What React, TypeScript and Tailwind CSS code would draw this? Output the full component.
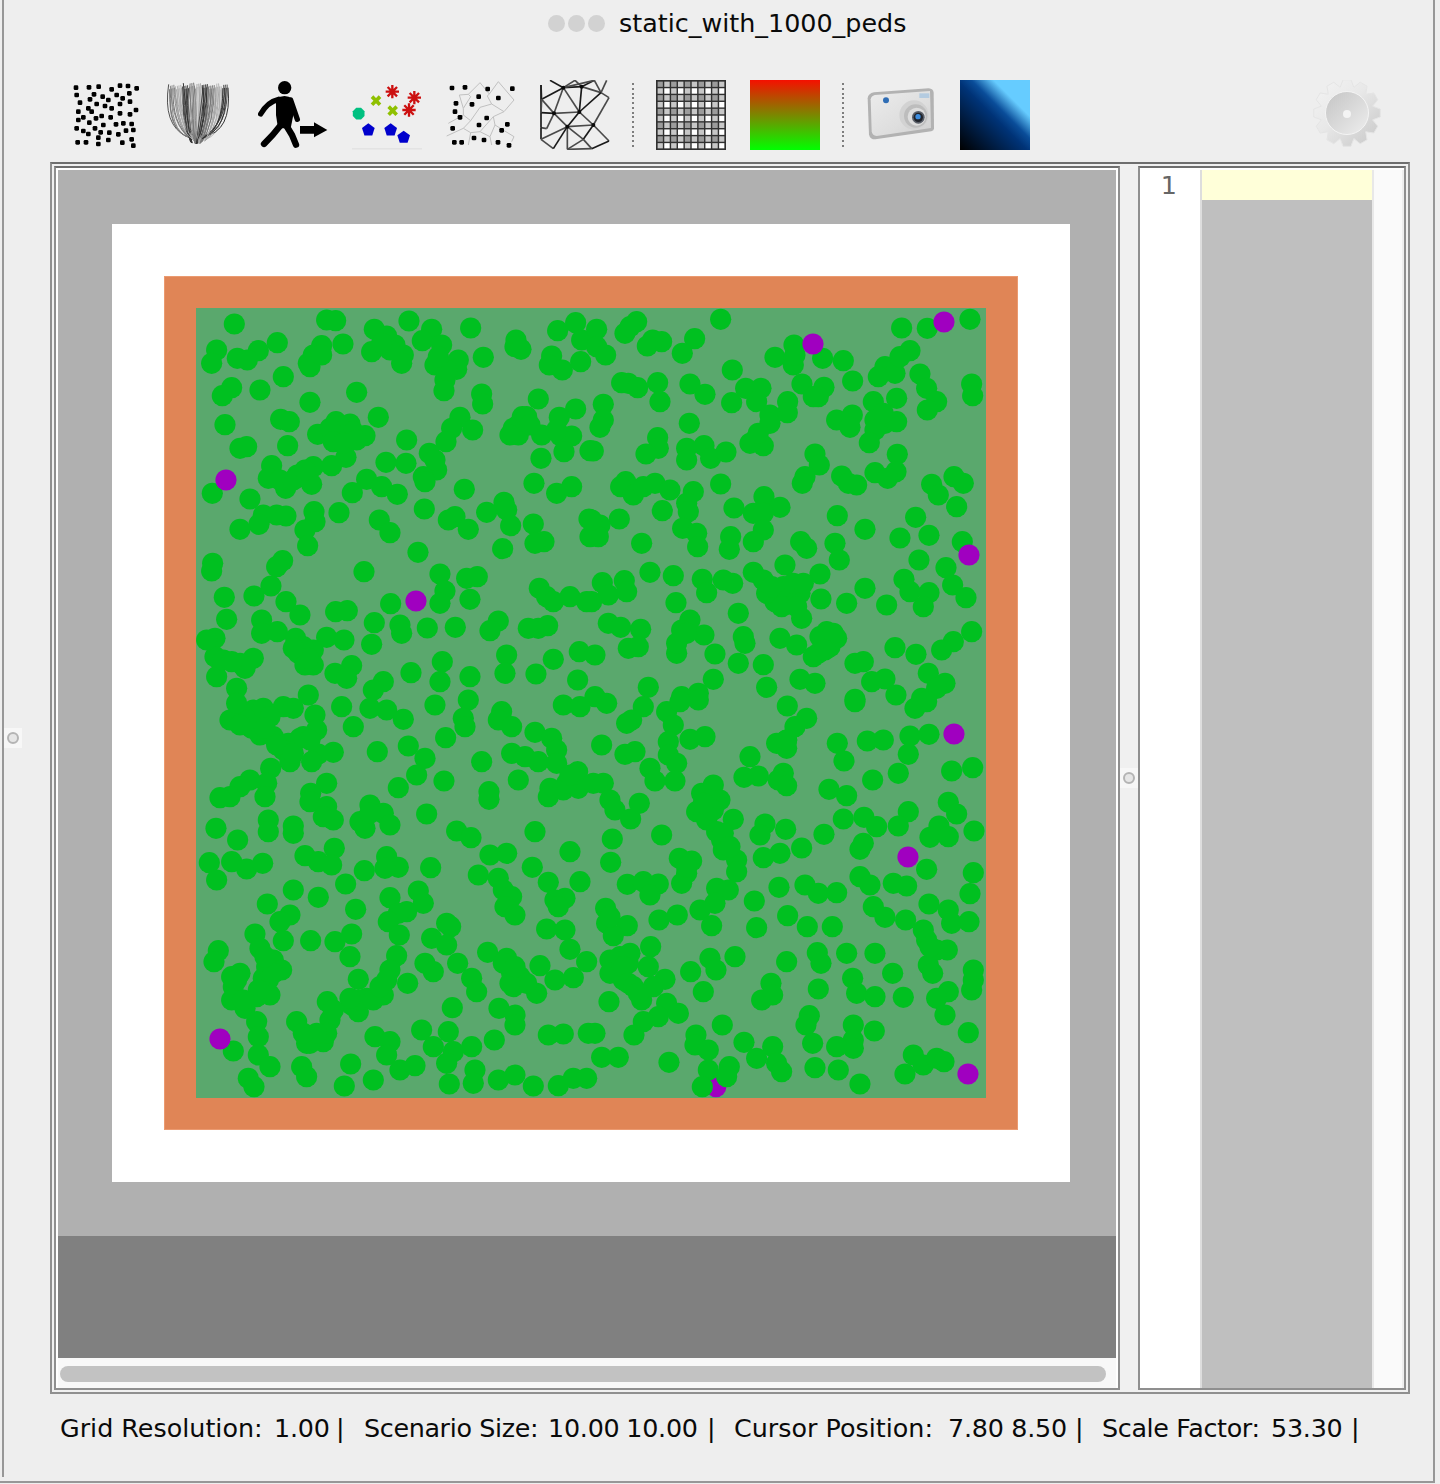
import React from "react";

const parse = (s: string, ox: number, oy: number) =>
  s.trim().split(/\s*;\s*/).filter(Boolean).map((p) => {
    const [x, y] = p.split(",").map(Number);
    return [ox + x / 3 - 196, oy + y / 3 - 308] as [number, number];
  });

const Q1 = `133,72;410,60;437,62;657,63;842,84;553,88;725,88;1103,92;1157,68;262,128;459,132;590,108;697,122;755,135;80,150;205,152;395,137;370,165;545,155;615,135;640,165;635,190;880,172;978,120;975,140;993,148;142,175;172,180;65,190;355,190;360,200;735,195;805,180;800,208;1085,168;1078,195;1117,210;1172,185;1175,120;280,230;765,240;762,272;125,263;97,287;210,270;500,277;875,282;878,312;360,307;1045,297;1157,327;1108,352;105,374;272,358;298,365;438,365;480,372;565,352;810,352;785,385;848,390;997,350;970,385;985,405;1055,405;1112,408;1145,408;383,403;440,405;470,405;525,407;650,420;768,425;150,445;170,440;293,437;1122,455;1200,452;718,460;468,472;1053,475;245,497;370,500;425,497;588,487;648,490;322,525;235,535;345,530;365,553;287,565;530,538;740,510;700,530;705,545;575,560;622,583;487,578;67,580;180,597;823,568;1032,550;1100,580;1145,560;942,607;890,637;950,630;962,677;703,627;447,638;372,635;375,665;345,690;353,737;220,645;260,645;288,648;207,673;150,688;568,660;600,698;775,660;795,650;835,688;1030,672;1062,725;1035,730;938,746;1197,657;1200,710;684,757;278,782;260,800;68,790;65,813;522,815;750,822;243,858;830,835;862,830;1048,865;1070,890;1090,905;1140,890;1190,905;765,873;750,910;840,898;602,911;103,892;192,888;288,905;330,945;437,935;472,932;110,958;553,968;215,960;925,963;900,992;630,975;635,1000;712,984;796,982;1015,985;1045,985;1073,977;75,1015;215,1000;262,995;317,1015;410,1012;462,1020;545,1033;75,1070;190,1075;325,1060;370,1050;150,1090;165,1105;370,1095;345,1095;950,1065;945,1120;1090,1078;1168,1055;757,1085;485,1097;435,1120;470,1135;80,1130;663,1118;750,1145;840,1130;1038,1122;1163,1140;140,1165;580,1145;550,1170;355,1185;50,1020;100,1080;125,1085;340,1040;355,1075;310,1045;450,380;490,395;420,385;430,425;460,430;500,420;985,375;1010,350;1020,375;960,405;600,150;575,130;770,210;745,170;395,165;1100,390;735,480;270,540;310,540;345,510`;
const Q2 = `392,58;140,65;1140,58;20,88;105,100;935,84;1012,85;612,135;314,116;215,125;188,120;172,138;960,152;555,172;698,175;760,182;20,140;47,165;610,195;277,160;885,200;915,220;930,170;865,230;427,210;95,248;115,250;143,263;203,248;990,222;788,243;300,252;345,283;636,252;702,262;685,290;670,290;467,265;513,265;1145,252;1148,287;1010,265;1040,305;210,305;425,308;500,305;593,305;592,338;850,305;920,295;40,313;1012,330;540,345;540,370;740,360;787,345;780,382;855,360;885,370;920,365;855,390;40,360;30,382;298,370;203,413;205,445;168,462;838,428;495,420;520,437;480,430;290,445;290,480;342,437;362,475;408,456;10,453;675,462;688,495;922,463;918,515;855,518;893,535;755,528;775,550;800,555;645,530;637,550;1092,530;1120,550;1025,553;1045,585;1100,620;107,545;92,560;130,585;160,560;195,550;240,570;392,552;310,575;290,610;295,635;217,632;522,590;570,622;432,624;490,640;520,640;520,690;490,725;742,647;977,652;825,688;930,714;1017,706;88,657;30,675;25,710;5,660;278,685;320,700;323,740;422,710;418,748;155,730;632,725;650,745;735,730;748,780;585,795;690,822;1117,725;987,780;1068,803;1088,855;1128,893;180,817;250,827;37,848;103,842;55,885;110,875;337,838;350,878;400,840;428,850;490,817;520,840;555,880;600,880;630,880;555,905;600,910;635,955;693,897;770,910;825,865;942,838;960,875;1017,878;1000,920;890,915;5,905;258,908;445,940;300,960;275,990;55,970;92,982;152,988;342,1005;260,1060;260,1030;460,1010;465,1030;570,1015;620,1035;710,995;740,1015;700,1030;685,1060;115,1045;145,1040;15,1065;375,1062;1145,995;1090,1025;1055,1050;915,1043;978,1063;445,1090;520,1094;795,1090;820,1085;1015,1120;1065,1150;1040,1165;370,1138;630,1138;675,1150;845,1145;885,1137;175,1162;530,1162;918,1185;325,1180;275,1190;795,1198;995,1195;15,1190;530,880;580,860;610,850;575,920;640,850;620,920;720,1040;690,1010;670,1070;730,1000;705,1050;615,165;120,80;880,340;505,400;290,1000;545,860`;
const Q3 = `150,30;120,60;190,30;210,60;185,85;210,105;250,110;280,20;310,25;375,45;380,90;330,115;295,130;280,150;300,185;455,20;540,25;590,30;640,58;490,80;735,15;835,0;820,55;825,80;935,35;925,60;965,80;1120,15;1170,20;767,113;1035,97;1085,115;1100,150;1100,190;655,138;562,155;705,175;680,225;965,160;1005,170;1045,185;430,157;385,162;365,185;875,185;242,205;180,240;150,260;120,290;90,293;230,250;225,290;762,243;985,240;1163,215;1080,265;1075,290;1120,270;1165,265;625,263;410,250;362,280;360,305;410,320;400,350;430,360;897,275;897,298;540,315;580,340;510,365;525,385;600,375;235,360;235,395;310,378;310,400;710,342;800,393;843,413;78,385;1035,395;143,420;433,445;345,467;385,485;425,495;1140,455;590,470;625,502;585,505;950,460;900,465;58,488;125,485;170,507;218,490;722,503;1027,502;80,540;523,512;467,552;865,525;925,535;940,570;965,590;945,620;975,645;1075,547;1170,545;310,570;385,592;232,612;600,593;685,573;700,610;650,635;625,640;1125,595;1095,600;1105,620;497,628;300,645;270,665;595,665;628,705;770,670;782,680;725,715;770,735;1070,687;1125,690;195,702;280,722;362,722;435,725;485,702;1140,748;85,752;210,745;480,770;620,767;893,757;72,785;250,780;275,810;950,775;705,790;730,815;803,790;1050,797;1190,785;150,820;220,835;505,838;600,810;845,835;860,875;965,820;1095,840;1150,833;653,850;130,860;125,900;240,885;200,890;580,885;530,895;970,860;1040,880;412,905;485,915;505,935;787,923;927,925;165,925;975,945;200,965;320,965;420,960;975,975;695,990;775,995;555,1010;600,1025;1075,1005;1120,1002;1195,1000;913,1020;205,1010;400,1025;350,1030;360,1030;130,1053;730,1040;845,1040;790,1055;590,1065;770,1090;205,1065;335,1100;350,1130;482,1092;630,1110;675,1097;240,1100;855,1110;975,1125;175,1135;192,1160;550,1140;463,1158;778,1152;850,1150;925,1140;1030,1158;1105,1157;1150,1135;1190,1135;140,10;175,60;150,75;220,25;240,50;225,85;260,135;310,160;340,110;360,120;990,830;1010,850;960,850;940,790;975,800;230,800;235,840;250,820;205,870;225,770;125,830;140,840;160,900;510,900;480,895;550,900;570,860;590,840;430,930;410,1000;380,1000;340,1000;540,340;1130,250;1140,225`;
const Q4 = `50,10;160,20;125,60;110,70;230,35;250,75;325,0;270,5;592,18;795,5;650,55;615,80;590,120;560,130;590,145;975,25;1010,5;35,135;105,163;135,155;235,125;235,165;260,190;300,118;345,110;180,205;195,243;255,243;480,170;462,232;505,228;580,220;565,240;590,257;742,130;762,183;832,123;880,120;960,108;1017,103;955,163;925,220;848,240;1085,213;1148,203;717,268;770,287;10,250;40,250;60,300;75,330;122,357;148,310;370,255;335,280;390,300;320,335;350,360;380,395;430,358;400,450;440,480;440,515;955,335;925,378;760,357;822,352;860,380;820,430;810,448;1075,307;1100,342;1047,378;1020,412;1075,410;1152,393;702,403;525,372;510,405;587,388;635,444;570,460;520,473;215,405;67,417;62,487;268,475;305,483;290,520;275,550;112,553;160,545;205,552;180,585;1010,508;1150,518;1140,581;645,555;685,580;740,578;567,562;810,530;840,555;910,550;950,558;380,565;415,570;375,610;330,630;493,603;1017,612;1075,630;1085,670;1137,665;850,620;885,652;947,660;1000,690;1010,720;1040,750;1072,750;593,647;652,680;727,680;500,683;365,677;262,645;207,660;47,625;50,670;112,677;70,707;682,758;693,790;770,760;855,760;590,785;1015,795;1028,820;182,740;175,800;85,780;70,810;115,790;100,840;360,775;435,770;378,810;302,815;340,875;908,820;1150,840;788,835;800,880;855,890;940,892;685,867;543,850;515,900;548,885;1075,875;1040,895;1065,945;57,905;155,900;225,838;190,860;230,910;265,940;205,950;160,965;132,1005;15,1000;658,947;648,975;668,1030;790,975;790,1020;790,1045;740,1040;853,993;1135,998;318,1005;397,975;315,1035;355,1050;462,1027;548,1040;500,1075;560,1090;575,1115;35,1072;85,1072;237,1087;355,1110;337,1160;418,1100;410,1130;675,1103;745,1110;810,1152;970,1065;945,1122;1000,1095;1040,1075;1062,1085;60,780;90,770;120,760;60,820;90,820;100,800;115,850;130,860;145,880;360,300;370,330;340,310;395,420;590,120;400,400;420,440;60,650;290,500;1020,740;1150,810;1145,870`;

const GREEN = [...parse(Q1, 190, 300), ...parse(Q2, 590, 300), ...parse(Q3, 190, 700), ...parse(Q4, 590, 700)];
const PURPLE: [number, number][] = [
  [944, 322], [813, 344], [226, 480], [969, 555], [416, 601], [954, 734], [908, 857], [220, 1039], [968, 1074],
].map(([x, y]) => [x - 196, y - 308]);

function Pedestrians() {
  return (
    <svg viewBox="0 0 790 790" className="block h-[790px] w-[790px]">
      <circle cx={716 - 196} cy={1087 - 308} r={10.3} fill="#a000c0" />
      {GREEN.map(([x, y], i) => (
        <circle key={i} cx={x} cy={y} r={10.6} fill="#00c020" />
      ))}
      {PURPLE.map(([x, y], i) => (
        <circle key={i} cx={x} cy={y} r={10.6} fill="#a000c0" />
      ))}
    </svg>
  );
}

const DOTS1 = `78,263;117,262;146,260;185,268;210,257;234,258;260,265;80,285;132,283;238,280;158,290;200,285;218,295;120,298;175,300;90,308;140,312;240,305;210,312;165,318;115,325;258,330;85,335;185,325;125,335;210,340;240,343;155,348;138,355;100,352;182,352;85,360;118,368;160,375;198,373;220,370;245,372;80,385;135,385;100,393;250,390;228,392;115,402;152,397;178,398;205,403;145,413;245,418;175,420;83,427;108,427;145,432;217,428;250,437`;
const DOTS5 = `1206,264;1245,262;1313,267;1387,266;1286,290;1345,294;1218,310;1266,313;1215,335;1230,352;1310,354;1372,373;1287,375;1208,385;1355,391;1272,414;1302,420;1213,427;1235,427;1344,427;1377,436`;
const pts = (s: string) => s.split(";").map((p) => p.split(",").map(Number));

const Icon = ({ vb, children }: { vb: string; children: React.ReactNode }) => (
  <svg viewBox={vb} className="block h-[70px] w-[70px] shrink-0 blur-[0.4px]">
    {children}
  </svg>
);

function IconScatter() {
  return (
    <Icon vb="60 240 210 210">
      {pts(DOTS1).map(([x, y], i) => (
        <rect key={i} x={x - 7} y={y - 7} width={14} height={14} rx={4} fill="#000000" />
      ))}
    </Icon>
  );
}

function IconBush() {
  const lines = [];
  for (let i = 0; i < 70; i++) {
    const t = ((i * 31) % 70) / 69;
    const off = t - 0.5;
    const tx = 445 + off * 178;
    const ty = 248 + ((i * 37) % 19) + off * off * 20;
    const bx = 445 + off * 50 + ((i * 7) % 21) - 10;
    const by = 432 - off * off * 90;
    const cx = 445 + off * 185 + ((i * 13) % 31) - 15;
    const cy = 345 + off * off * 120 + ((i * 29) % 30);
    lines.push(
      <path
        key={i}
        d={`M${tx} ${ty}Q${cx} ${cy} ${bx} ${by}`}
        fill="none"
        stroke={i % 3 === 0 ? "#333333" : i % 3 === 1 ? "#777777" : "#aaaaaa"}
        strokeWidth={i % 2 ? 3 : 2.5}
      />
    );
  }
  return <Icon vb="342 240 210 210">{lines}</Icon>;
}

function IconWalker() {
  return (
    <Icon vb="624 240 210 210">
      <circle cx={704} cy={263} r={20} fill="#000000" />
      <path d="M678 296Q704 280 728 296L730 345L722 385L684 385L678 345Z" fill="#000000" />
      <path d="M686 298Q652 306 632 342" fill="none" stroke="#000000" strokeWidth={16} strokeLinecap="round" />
      <path d="M722 300L742 358" fill="none" stroke="#000000" strokeWidth={16} strokeLinecap="round" />
      <path d="M695 372L668 405L642 432" fill="none" stroke="#000000" strokeWidth={19} strokeLinecap="round" />
      <path d="M706 372L726 405L738 434" fill="none" stroke="#000000" strokeWidth={19} strokeLinecap="round" />
      <path d="M750 378H792V367L832 390L792 412V401H750Z" fill="#000000" />
    </Icon>
  );
}

const star = (cx: number, cy: number, r: number, n: number, rot = 0) =>
  Array.from({ length: n }, (_, i) => {
    const a = rot + (i * Math.PI) / n;
    return `M${cx - Math.cos(a) * r} ${cy - Math.sin(a) * r}L${cx + Math.cos(a) * r} ${cy + Math.sin(a) * r}`;
  }).join("");
const poly = (cx: number, cy: number, r: number, n: number, rot = -Math.PI / 2) =>
  Array.from({ length: n }, (_, i) => {
    const a = rot + (i * 2 * Math.PI) / n;
    return `${cx + Math.cos(a) * r},${cy + Math.sin(a) * r}`;
  }).join(" ");

function IconClasses() {
  return (
    <Icon vb="906 240 210 210">
      <polygon points={poly(926, 341, 19, 8, Math.PI / 8)} fill="#00c080" />
      <path d={star(978, 302, 17, 2, Math.PI / 4)} stroke="#8fc000" strokeWidth={11} fill="none" />
      <path d={star(1028, 332, 17, 2, Math.PI / 4)} stroke="#8fc000" strokeWidth={11} fill="none" />
      <path d={star(1027, 275, 20, 4)} stroke="#cc1010" strokeWidth={7} fill="none" />
      <path d={star(1093, 293, 20, 4)} stroke="#cc1010" strokeWidth={7} fill="none" />
      <path d={star(1077, 330, 20, 4)} stroke="#cc1010" strokeWidth={7} fill="none" />
      <polygon points={poly(955, 390, 20, 5)} fill="#0000cc" />
      <polygon points={poly(1022, 390, 20, 5)} fill="#0000cc" />
      <polygon points={poly(1061, 412, 20, 5)} fill="#0000cc" />
      <rect x={906} y={445} width={210} height={3} fill="#dddddd" />
    </Icon>
  );
}

function IconVoronoi() {
  const cells = [
    "M1228 285L1255 283L1290 248L1318 282L1345 245L1392 300L1362 335L1325 312L1312 288L1318 282",
    "M1255 283L1262 290L1240 325L1240 345L1262 362L1290 322L1325 312",
    "M1228 285L1240 325",
    "M1262 362L1240 385L1262 398L1290 395L1330 350L1362 335",
    "M1330 350L1335 375L1392 410L1385 425",
    "M1335 375L1320 410L1325 435",
    "M1290 395L1320 410",
    "M1240 385L1190 408",
    "M1262 398L1255 435",
    "M1240 345L1195 370",
  ];
  return (
    <Icon vb="1188 240 210 210">
      {cells.map((d, i) => (
        <path key={i} d={d} fill="none" stroke="#c0c0c0" strokeWidth={3} />
      ))}
      {pts(DOTS5).map(([x, y], i) => (
        <rect key={i} x={x - 7} y={y - 7} width={14} height={14} rx={4} fill="#000000" />
      ))}
    </Icon>
  );
}

function IconDelaunay() {
  const N: Record<string, number[]> = {
    A: [85, 35], B: [140, 32], C: [198, 50], D: [20, 70], E: [57, 112], F: [133, 108], G: [175, 147], H: [97, 152],
    I: [18, 110], J: [18, 190], K: [55, 218], L: [97, 220], M: [145, 190], N: [170, 218], O: [222, 195], P: [222, 65],
    Q: [45, 13], R: [120, 13], S: [178, 13], T: [215, 13], U: [18, 27], V: [35, 158], W: [18, 155],
  };
  const E = "QA RA RB SB SC TC AB BC CP AD DE UD UI AE AF BF EF FG CF PG EH FH HG EV IE ID VW WJ JH JK KH LH HM MG GO MN NO LM LN IW SA".split(" ");
  return (
    <Icon vb="15 12 210 210">
      {E.map((e, i) => {
        const a = N[e[0]], b = N[e[1]];
        return <line key={i} x1={a[0]} y1={a[1]} x2={b[0]} y2={b[1]} stroke={i % 3 === 0 ? "#1a1a1a" : "#4a4a4a"} strokeWidth={5} />;
      })}
      {["A", "B", "E", "F", "H", "G"].map((k) => (
        <circle key={k} cx={N[k][0]} cy={N[k][1]} r={6} fill="#0a0a0a" />
      ))}
    </Icon>
  );
}

function IconGrid() {
  const p = Array.from({ length: 11 }, (_, i) => i * 6.86 + 0.7);
  return (
    <svg viewBox="0 0 70 70" className="block h-[70px] w-[70px] shrink-0">
      <rect width={70} height={70} fill="#ffffff" />
      {p.slice(0, 10).map((v, i) =>
        i % 2 === 0 ? (
          <g key={i}>
            <rect x={v} y={0} width={6.86} height={70} fill="#000000" fillOpacity={0.22} />
            <rect x={0} y={v} width={70} height={6.86} fill="#000000" fillOpacity={0.22} />
          </g>
        ) : null
      )}
      {p.map((v, i) => (
        <g key={i}>
          <rect x={v - 0.7} y={0} width={1.4} height={70} fill="#303030" />
          <rect x={0} y={v - 0.7} width={70} height={1.4} fill="#303030" />
        </g>
      ))}
      <rect x={0.7} y={0.7} width={68.6} height={68.6} fill="none" stroke="#303030" strokeWidth={1.4} />
    </svg>
  );
}

function IconCamera() {
  return (
    <Icon vb="1008 240 210 210">
      <defs>
        <linearGradient id="camBody" x1="0" y1="0" x2="1" y2="1">
          <stop offset="0" stopColor="#ececec" />
          <stop offset="0.6" stopColor="#dedede" />
          <stop offset="1" stopColor="#cfcfcf" />
        </linearGradient>
      </defs>
      <path d="M1032 277L1196 265Q1210 266 1211 278L1212 385Q1212 392 1204 394L1036 418Q1020 418 1017 404L1013 295Q1014 281 1032 277Z" fill="#b2b2b2" />
      <path d="M1034 285L1200 273L1203 384L1040 408Q1026 406 1025 394L1022 298Q1024 288 1034 285Z" fill="url(#camBody)" />
      <circle cx={1068} cy={301} r={9} fill="#2f6db5" />
      <rect x={1168} y={280} width={30} height={14} fill="#b4cbe0" />
      <circle cx={1152} cy={345} r={44} fill="#d2d2d2" />
      <circle cx={1157} cy={348} r={35} fill="#bdbdbd" />
      <circle cx={1160} cy={350} r={27} fill="#dddddd" />
      <circle cx={1165} cy={352} r={19} fill="#5a5f68" />
      <circle cx={1165} cy={352} r={14} fill="#20242c" />
      <circle cx={1164} cy={350} r={8} fill="#3e8ee0" />
    </Icon>
  );
}

function IconGear() {
  const n = 12;
  let d = "";
  for (let i = 0; i < n; i++) {
    const a = (i * 2 * Math.PI) / n;
    const w = Math.PI / n;
    const P = (r: number, t: number) => `${1347 + Math.cos(t) * r} ${113 + Math.sin(t) * r}`;
    d += `${i ? "L" : "M"}${P(26.5, a - w)}L${P(33.5, a - w * 0.45)}L${P(33.5, a + w * 0.45)}L${P(26.5, a + w)}`;
  }
  d += "Z";
  return (
    <svg viewBox="1312 80 70 70" className="block h-[70px] w-[70px] shrink-0 blur-[0.4px]">
      <defs>
        <linearGradient id="gearO" x1="0" y1="0" x2="1" y2="1">
          <stop offset="0" stopColor="#f4f4f4" />
          <stop offset="0.45" stopColor="#e8e8e8" />
          <stop offset="1" stopColor="#c6c6c6" />
        </linearGradient>
        <linearGradient id="gearI" x1="0" y1="0" x2="1" y2="1">
          <stop offset="0" stopColor="#c4c4c4" />
          <stop offset="1" stopColor="#eeeeee" />
        </linearGradient>
      </defs>
      <path d={d} fill="url(#gearO)" stroke="#e4e4e4" strokeWidth={1} />
      <circle cx={1347} cy={113} r={21.5} fill="url(#gearI)" stroke="#f4f4f4" strokeWidth={1} />
      <circle cx={1347} cy={114} r={4} fill="#f4f4f4" />
    </svg>
  );
}

const Separator = () => (
  <div className="-ml-[2px] -mr-[2px] flex h-[66px] w-[2px] shrink-0 flex-col justify-between self-center py-[1px]">
    {Array.from({ length: 14 }, (_, i) => (
      <div key={i} className="h-[2px] w-[2px] bg-[#7d7d7d]" />
    ))}
  </div>
);

const Grip = () => <div className="h-[12px] w-[12px] rounded-full border-2 border-[#b4b4b4] bg-[#e6e6e6]" />;

export default function App() {
  return (
    <div
      className="relative h-[1484px] w-[1440px] overflow-hidden bg-[#eeeeee] text-[25.4px] leading-[32px] text-[#0a0a0a]"
      style={{ fontFamily: '"DejaVu Sans", sans-serif' }}
    >
      <div className="relative flex h-[1483px] w-[1435px] flex-col border-b-2 border-r-2 border-[#979797]">
        <div className="absolute left-[2px] top-0 h-[1477px] w-[2px] bg-[#979797]" />
        <div className="absolute left-[4px] top-[728px] flex h-[20px] w-[18px] items-center justify-center bg-[#f7f7f7]">
          <Grip />
        </div>

        <div className="flex h-[46px] items-center pl-[548px]">
          <div className="flex gap-[3px]">
            <div className="h-[17px] w-[17px] rounded-full bg-[#d2d2d2]" />
            <div className="h-[17px] w-[17px] rounded-full bg-[#d2d2d2]" />
            <div className="h-[17px] w-[17px] rounded-full bg-[#d2d2d2]" />
          </div>
          <span className="ml-[14px] whitespace-nowrap">static_with_1000_peds</span>
        </div>

        <div className="mt-[34px] flex h-[70px] items-center gap-6 pl-[70px]">
          <IconScatter />
          <IconBush />
          <IconWalker />
          <IconClasses />
          <IconVoronoi />
          <IconDelaunay />
          <Separator />
          <IconGrid />
          <div className="h-[70px] w-[70px] shrink-0 bg-[linear-gradient(to_bottom,#f51000,#00ff00)]" />
          <Separator />
          <IconCamera />
          <div className="h-[70px] w-[70px] shrink-0 bg-[linear-gradient(to_top_right,#000000_0%,#003377_48%,#0a4d99_58%,#66ccff_74%,#66ccff_100%)]" />
          <div className="ml-auto mr-[51px]">
            <IconGear />
          </div>
        </div>

        <div className="ml-[50px] mt-[12px] flex h-[1232px] w-[1360px] border-2 border-[#8f8f8f] border-t-[#6e6e6e] bg-[#f0f0f0] p-[2px]">
          <div className="flex w-[1066px] flex-col border-2 border-[#8f8f8f] border-t-[#6e6e6e] bg-white p-[2px] pb-0">
            <div className="flex h-[1066px] w-[1058px] items-start bg-[#b0b0b0] pl-[54px] pt-[54px]">
              <div className="flex h-[958px] w-[958px] items-center justify-center bg-white">
                <div className="flex h-[854px] w-[854px] items-center justify-center border border-[#eb9a70] bg-[#e08556]">
                  <div className="h-[790px] w-[790px] bg-[#5aa86d]">
                    <Pedestrians />
                  </div>
                </div>
              </div>
            </div>
            <div className="h-[122px] w-[1058px] bg-[#808080]" />
            <div className="flex flex-1 items-start bg-[#f8f8f8] pl-[2px] pt-[8px]">
              <div className="h-[16px] w-[1046px] rounded-full bg-[#c2c2c2]" />
            </div>
          </div>

          <div className="relative w-[18px] shrink-0">
            <div className="absolute left-0 top-[602px] flex h-[20px] w-[18px] items-center justify-center bg-[#f7f7f7]">
              <Grip />
            </div>
          </div>

          <div className="flex w-[268px] border-2 border-[#8f8f8f] border-t-[#6e6e6e] bg-white pt-[2px]">
            <div className="flex h-full w-[60px] shrink-0 justify-end pr-[23px] leading-[30px] text-[#666666]">1</div>
            <div className="w-[2px] shrink-0 bg-[#dddddd]" />
            <div className="flex w-[170px] shrink-0 flex-col bg-[#bfbfbf]">
              <div className="h-[30px] bg-[#ffffd9]" />
            </div>
            <div className="w-[2px] shrink-0 bg-[#e8e8e8]" />
            <div className="w-[28px] shrink-0 bg-[#fafafa]" />
            <div className="w-[2px] shrink-0 bg-[#eeeeee]" />
          </div>
        </div>

        <div className="ml-[60px] mt-[18px] flex whitespace-nowrap">
          <span className="w-[214px] shrink-0">Grid Resolution:</span>
          <span className="w-[62px] shrink-0 tracking-[-0.25px]">1.00</span>
          <span className="w-[28px] shrink-0">|</span>
          <span className="w-[184px] shrink-0 tracking-[-0.35px]">Scenario Size:</span>
          <span className="w-[159px] shrink-0 tracking-[-0.25px] [word-spacing:-1px]">10.00 10.00</span>
          <span className="w-[27px] shrink-0">|</span>
          <span className="w-[214px] shrink-0">Cursor Position:</span>
          <span className="w-[127px] shrink-0 tracking-[-0.25px]">7.80 8.50</span>
          <span className="w-[27px] shrink-0">|</span>
          <span className="w-[169px] shrink-0 tracking-[-0.35px]">Scale Factor:</span>
          <span className="w-[80px] shrink-0 tracking-[-0.25px]">53.30</span>
          <span className="shrink-0">|</span>
        </div>
      </div>
    </div>
  );
}
